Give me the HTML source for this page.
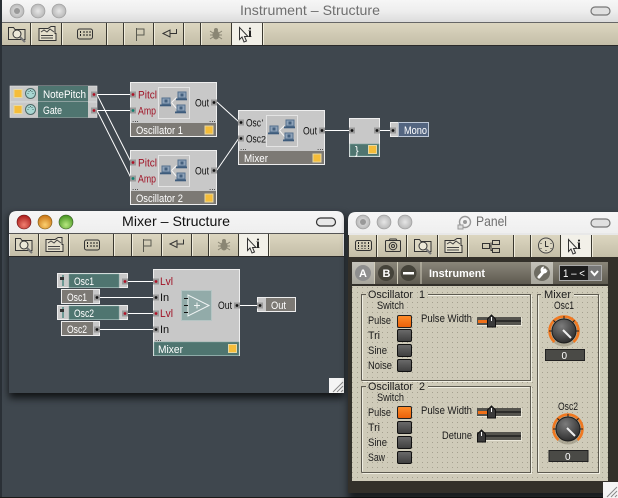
<!DOCTYPE html>
<html><head><meta charset="utf-8"><style>
html,body{margin:0;padding:0;background:#2a3036;width:618px;height:498px;overflow:hidden}
svg{display:block}
text{font-family:"Liberation Sans",sans-serif;font-size:11px;white-space:pre}
.w{fill:#fff}.r{fill:#a01225}.k{fill:#111}.p{fill:#1c1c1c}
.c{fill:none;stroke:#fff;stroke-width:1}
.i{fill:none;stroke:#333;stroke-width:1}
.d{fill:none;stroke:#3a382f}.l{fill:none;stroke:#f0ecdc}
</style></head><body>
<svg width="618" height="498" viewBox="0 0 618 498" xmlns="http://www.w3.org/2000/svg">
<defs>
<filter id="bl" x="-10%" y="-10%" width="120%" height="120%"><feGaussianBlur stdDeviation="4"/></filter>
<linearGradient id="title" x1="0" y1="0" x2="0" y2="1"><stop offset="0" stop-color="#f6f6f6"/><stop offset=".5" stop-color="#eeeeee"/><stop offset="1" stop-color="#dcdcdc"/></linearGradient>
<linearGradient id="tb" x1="0" y1="0" x2="0" y2="1"><stop offset="0" stop-color="#dcd6c0"/><stop offset="1" stop-color="#c4beA8"/></linearGradient>
<linearGradient id="hd" x1="0" y1="0" x2="0" y2="1"><stop offset="0" stop-color="#8a867a"/><stop offset="1" stop-color="#5e5a50"/></linearGradient>
<linearGradient id="hl" x1="0" y1="0" x2="0" y2="1"><stop offset="0" stop-color="#c4c2ba"/><stop offset="1" stop-color="#a8a69c"/></linearGradient>
<linearGradient id="sw" x1="0" y1="0" x2="0" y2="1"><stop offset="0" stop-color="#6b6b6b"/><stop offset="1" stop-color="#3e3e3e"/></linearGradient>
<linearGradient id="on" x1="0" y1="0" x2="0" y2="1"><stop offset="0" stop-color="#ff8d2a"/><stop offset="1" stop-color="#ea5f08"/></linearGradient>
<radialGradient id="kn" cx=".4" cy=".3" r=".8"><stop offset="0" stop-color="#7c7c7c"/><stop offset="1" stop-color="#242424"/></radialGradient>
<radialGradient id="gb" cx=".5" cy=".5" r=".6"><stop offset="0" stop-color="#e6e6e6"/><stop offset=".7" stop-color="#c0c0c0"/><stop offset="1" stop-color="#9a9a9a"/></radialGradient>
<radialGradient id="rb" cx=".5" cy=".7" r=".7"><stop offset="0" stop-color="#f08070"/><stop offset="1" stop-color="#a81818"/></radialGradient>
<radialGradient id="yb" cx=".5" cy=".7" r=".7"><stop offset="0" stop-color="#fbd070"/><stop offset="1" stop-color="#c87010"/></radialGradient>
<radialGradient id="grb" cx=".5" cy=".7" r=".7"><stop offset="0" stop-color="#b8e880"/><stop offset="1" stop-color="#40901c"/></radialGradient>
<pattern id="dots" width="5" height="5" patternUnits="userSpaceOnUse"><rect width="5" height="5" fill="#cfcbb9"/><rect x="2" y="2" width="1" height="1" fill="#a5a190"/></pattern>

<g id="pb"><rect x="-3" y="-3" width="6" height="6" fill="#9a9a9a"/><circle r="1.4" fill="#111"/></g>
<g id="pr"><rect x="-3" y="-3" width="6" height="6" fill="#9a9a9a"/><circle r="1.4" fill="#b01025"/></g>
<g id="pt"><rect x="-3" y="-3" width="6" height="6" fill="#9a9a9a"/><circle r="1.4" fill="#108070"/></g>
<g id="y"><rect x="-4" y="-4" width="8" height="8" fill="#f5bd3a" stroke="#e8d8a0"/></g>
<g id="midi"><circle r="5" fill="#a8d6d2" stroke="#4e6a68"/><path d="M-3,0h1M2,0h1M-2,-2h1M1,-2h1M-.5,-3h1" stroke="#4e6a68"/></g>
<g id="lap"><rect x="-3.500" y="-4.500" width="8" height="6" fill="#8ea2b8" stroke="#54708e"/><rect x="-1" y="-3" width="3" height="3" fill="#44607e"/><rect x="-5.500" y="2" width="11" height="1.800" fill="#3e5c7c"/></g>
<g id="mod"><rect x="0" y="0" width="31" height="31" fill="#c2c2c2" stroke="#e4e4e4"/><path d="M13,15 L18,10 M13,15 L18,21" stroke="#f4f4f4" fill="none"/><use href="#lap" x="7" y="15"/><use href="#lap" x="23" y="9"/><use href="#lap" x="22" y="22"/></g>

<g id="ic-s" class="i"><path d="M-8.500,-6.500 h5 l1.500,2 h10 v10 h-16.500z" fill="#dcd7c3"/><circle cx="0" cy="0" r="4" fill="#ece8d8"/><path d="M3,3 L8,8" stroke-width="2.200" stroke="#777"/></g>
<g id="ic-g" class="i"><path d="M-8,-5.500 h9 l3,-2 h4 v7 h1 v7 h-17z" fill="#e4dfcc"/><path d="M-6,-2 l3,-2 3,2 3,-3 l4,3 M-6,1.500 h12 M-6,4 h12" stroke="#444"/></g>
<g id="ic-m" class="i"><rect x="-7.500" y="-5" width="15" height="10" rx="2"/><path d="M-4.500,-3 v6 M-1,-3 v6 M2,-3 v6 M5,-3 v6" stroke="#222" stroke-dasharray="2 1"/></g>
<g id="ic-f"><path d="M-3.500,-6 V7 M-3.500,-5 H4 V1 H-3.500" fill="none" stroke="#5a5a50"/></g>
<g id="ic-a" class="i"><path d="M-7,-.5 L0,-4 V3Z M0,-.5 H6.500 V-5"/></g>
<g id="ic-b"><ellipse cx="0" cy="1" rx="3.500" ry="4.500" fill="#8a8674"/><circle cx="0" cy="-4" r="2" fill="#8a8674"/><path d="M-6,-3 L-3,-1 M6,-3 L3,-1 M-6,1 H6 M-6,5 L-3,3 M6,5 L3,3" stroke="#8a8674" fill="none"/></g>
<g id="ic-i"><path d="M-5.500,-6.500 V5.500 L-3,3 L-1,8 L1.500,7 L-.5,2.500 L3,2.500Z" fill="#f4f2ec" stroke="#333"/><text x="3" y="3" style="font-family:'Liberation Serif',serif;font-size:14px;font-weight:bold" fill="#222">i</text></g>

<g id="sl"><rect x="0" y="0" width="45" height="9" fill="#e9e6d8"/><rect x="0" y="0" width="44" height="8" fill="#55544e"/><rect x="1" y="3" width="43" height="2" fill="#2c2c2a"/></g>
<g id="th"><path d="M0,12 V4 L4,0 8,4 V12Z" fill="#3a3a3a" stroke="#111"/><path d="M4,2 V6" stroke="#fff"/></g>
<g id="swo"><rect width="14" height="12" rx="1.500" fill="url(#sw)" stroke="#111"/></g>
<g id="swn"><rect width="14" height="12" rx="1.500" fill="url(#on)" stroke="#222"/></g>
<g id="knob"><circle r="15.500" fill="#8a8470" opacity=".5"/><path d="M-9.500,11 A14.500,14.500 0 1 1 9.500,11" fill="none" stroke="#f07820" stroke-width="2.600"/><path d="M-15,0h3M15,0h-3M0,-15v3M-10.600,-10.600l2,2M10.600,-10.600l-2,2" stroke="#222"/><circle r="12" fill="url(#kn)" stroke="#1c1c1c"/><path d="M-1,-1 L7,7" stroke="#eee" stroke-width="2"/></g>
</defs>

<!-- TOP WINDOW -->
<rect x="2" y="0" width="616" height="497" fill="#3f474e"/>
<rect x="0" y="497" width="618" height="1" fill="#1a1a18"/>
<rect x="2" y="0" width="616" height="22" fill="url(#title)"/>
<rect x="2" y="22" width="616" height="1" fill="#666"/>
<circle cx="17" cy="11" r="7" fill="url(#gb)" stroke="#999" stroke-width=".6"/><circle cx="17" cy="11" r="3" fill="#999"/>
<circle cx="38" cy="11" r="7" fill="url(#gb)" stroke="#999" stroke-width=".6"/>
<circle cx="59" cy="11" r="7" fill="url(#gb)" stroke="#999" stroke-width=".6"/>
<text x="240" y="15" textLength="140" lengthAdjust="spacingAndGlyphs" style="font-size:14px" fill="#6f6f6f">Instrument – Structure</text>
<rect x="591" y="7" width="19" height="8" rx="4" fill="#e0e0e0" stroke="#777" stroke-width="1.200"/>
<rect x="2" y="23" width="616" height="22" fill="url(#tb)"/>
<rect x="2" y="45" width="616" height="1" fill="#2a2a2a"/>
<path class="d" d="M30.500,23V45M61.500,23V45M106.500,23V45M123.500,23V45M153.500,23V45M183.500,23V45M200.500,23V45M231.500,23V45M262.500,23V45"/>
<path class="l" d="M31.500,23V45M62.500,23V45M107.500,23V45M124.500,23V45M154.500,23V45M184.500,23V45M201.500,23V45M263.500,23V45"/>
<rect x="232" y="23" width="30" height="22" fill="#f2f0e8"/>
<use href="#ic-s" x="17" y="34"/><use href="#ic-g" x="47" y="34"/><use href="#ic-m" x="85" y="34"/><use href="#ic-f" x="140" y="34"/><use href="#ic-a" x="170" y="34"/><use href="#ic-b" x="216" y="34"/><use href="#ic-i" x="245" y="34"/>

<!-- top cables -->
<path class="c" d="M97,94.500H132M97,94.500L131,162M97,110.500H132M97,110.500L131,178M217,102L239,122M217,170L239,138M325,130.500H349M380,130.500H390"/>

<!-- NotePitch / Gate -->
<rect x="10" y="86" width="87" height="15.500" fill="#c8c8c8" stroke="#e6e6e6" stroke-width=".6"/>
<rect x="38" y="86" width="50" height="15.500" fill="#4f7570"/>
<use href="#y" x="18" y="93.500"/><use href="#midi" x="30.500" y="93.500"/>
<text x="43" y="98" class="w" textLength="43" lengthAdjust="spacingAndGlyphs">NotePitch</text><use href="#pr" x="94" y="94.500"/>
<rect x="10" y="102" width="87" height="15.500" fill="#c8c8c8" stroke="#e6e6e6" stroke-width=".6"/>
<rect x="38" y="102" width="50" height="15.500" fill="#4f7570"/>
<use href="#y" x="18" y="109.500"/><use href="#midi" x="30.500" y="109.500"/>
<text x="43" y="114" class="w" textLength="19" lengthAdjust="spacingAndGlyphs">Gate</text><use href="#pr" x="94" y="110.500"/>

<!-- Oscillator 1 -->
<rect x="130.500" y="82.500" width="86" height="54" fill="#c8c8c8" stroke="#eee"/>
<rect x="131" y="123" width="85" height="13" fill="#7c7974"/>
<use href="#mod" x="158.500" y="87.500"/>
<use href="#pr" x="133" y="94.500"/><use href="#pt" x="133" y="110.500"/>
<text x="138" y="98.500" class="r" textLength="19" lengthAdjust="spacingAndGlyphs">Pitcl</text><text x="138" y="114.500" class="r" textLength="18" lengthAdjust="spacingAndGlyphs">Amp</text>
<text x="195" y="106.500" class="k" textLength="14" lengthAdjust="spacingAndGlyphs">Out</text><use href="#pb" x="214" y="102.500"/>
<text x="132" y="122" class="k" style="font-size:8px">...</text><text x="209" y="122" class="k" style="font-size:8px">...</text>
<text x="136" y="134" class="w" textLength="47" lengthAdjust="spacingAndGlyphs">Oscillator 1</text><use href="#y" x="209" y="130"/>

<!-- Oscillator 2 -->
<rect x="130.500" y="150.500" width="86" height="54" fill="#c8c8c8" stroke="#eee"/>
<rect x="131" y="191" width="85" height="13" fill="#7c7974"/>
<use href="#mod" x="158.500" y="155.500"/>
<use href="#pr" x="133" y="162.500"/><use href="#pt" x="133" y="178.500"/>
<text x="138" y="166.500" class="r" textLength="19" lengthAdjust="spacingAndGlyphs">Pitcl</text><text x="138" y="182.500" class="r" textLength="18" lengthAdjust="spacingAndGlyphs">Amp</text>
<text x="195" y="174.500" class="k" textLength="14" lengthAdjust="spacingAndGlyphs">Out</text><use href="#pb" x="214" y="170.500"/>
<text x="132" y="190" class="k" style="font-size:8px">...</text><text x="209" y="190" class="k" style="font-size:8px">...</text>
<text x="136" y="202" class="w" textLength="47" lengthAdjust="spacingAndGlyphs">Oscillator 2</text><use href="#y" x="209" y="198"/>

<!-- Mixer (top) -->
<rect x="238.500" y="110.500" width="86" height="54" fill="#c8c8c8" stroke="#eee"/>
<rect x="239" y="151" width="85" height="13" fill="#7c7974"/>
<use href="#mod" x="266.500" y="115.500"/>
<use href="#pb" x="241" y="122.500"/><use href="#pb" x="241" y="138.500"/>
<text x="246" y="126.500" class="k" textLength="15" lengthAdjust="spacingAndGlyphs">Osc</text><text x="246" y="142.500" class="k" textLength="15" lengthAdjust="spacingAndGlyphs">Osc</text><text x="261.500" y="126" class="k" style="font-size:9px">'</text><text x="261" y="142.500" class="k" style="font-size:9px">2</text>
<text x="303" y="134.500" class="k" textLength="14" lengthAdjust="spacingAndGlyphs">Out</text><use href="#pb" x="322" y="130.500"/>
<text x="240" y="150" class="k" style="font-size:8px">...</text><text x="317" y="150" class="k" style="font-size:8px">...</text>
<text x="244" y="162" class="w" textLength="24" lengthAdjust="spacingAndGlyphs">Mixer</text><use href="#y" x="317" y="158"/>

<!-- small node -->
<rect x="349.500" y="118.500" width="30" height="38" fill="#c8c8c8" stroke="#eee"/>
<rect x="350" y="144" width="29" height="12" fill="#4f7570" stroke="#7fa5a0" stroke-width=".6"/>
<use href="#pb" x="352" y="130.500"/><use href="#pb" x="377" y="130.500"/>
<text x="355" y="154" class="w">}</text><use href="#y" x="372.500" y="149.500"/>

<!-- Mono -->
<rect x="390.500" y="122.500" width="38" height="14" fill="#c8c8c8" stroke="#eee"/>
<rect x="399" y="123" width="29" height="13" fill="#536580"/>
<rect x="398.500" y="122.500" width="30" height="14" fill="none" stroke="#9db0c8" stroke-width=".6"/>
<use href="#pb" x="393" y="130.500"/>
<text x="404" y="134" class="w" textLength="23" lengthAdjust="spacingAndGlyphs">Mono</text>

<!-- MIXER WINDOW -->
<rect x="9" y="215" width="335" height="183" fill="#000" opacity=".75" filter="url(#bl)"/>
<path d="M9,256 V219 Q9,211 17,211 H336 Q344,211 344,219 V256Z" fill="url(#title)"/>
<rect x="9" y="256" width="335" height="137" fill="#3f474e"/>
<circle cx="24" cy="222" r="7" fill="url(#rb)" stroke="#611" stroke-width=".6"/>
<circle cx="45" cy="222" r="7" fill="url(#yb)" stroke="#751" stroke-width=".6"/>
<circle cx="66" cy="222" r="7" fill="url(#grb)" stroke="#352" stroke-width=".6"/>
<text x="122" y="226" textLength="108" lengthAdjust="spacingAndGlyphs" style="font-size:14px" fill="#111">Mixer – Structure</text>
<rect x="316.500" y="218" width="19" height="8" rx="4" fill="#e8e8e8" stroke="#333" stroke-width="1.200"/>
<rect x="9" y="233" width="335" height="1" fill="#555"/>
<rect x="10" y="234" width="333" height="22" fill="url(#tb)"/>
<rect x="9" y="256" width="335" height="1" fill="#2a2a2a"/>
<path class="d" d="M38.500,234V256M68.500,234V256M113.500,234V256M131.500,234V256M161.500,234V256M191.500,234V256M208.500,234V256M238.500,234V256M268.500,234V256"/>
<path class="l" d="M39.500,234V256M69.500,234V256M114.500,234V256M132.500,234V256M162.500,234V256M192.500,234V256M209.500,234V256M269.500,234V256"/>
<rect x="239" y="234" width="29" height="22" fill="#f2f0e8"/>
<use href="#ic-s" x="24" y="245"/><use href="#ic-g" x="54" y="245"/><use href="#ic-m" x="92" y="245"/><use href="#ic-f" x="147" y="245"/><use href="#ic-a" x="177" y="244.500"/><use href="#ic-b" x="224" y="245"/><use href="#ic-i" x="253" y="245"/>

<path class="c" d="M128,281.500H154M100,297.500H154M128,313.500H154M100,329.500H154M240,305.500H257"/>

<!-- knob nodes -->
<rect x="57.500" y="273.500" width="70" height="14" fill="#c8c8c8" stroke="#eee"/>
<rect x="69" y="274" width="50" height="13.500" fill="#4f7570" stroke="#7fa5a0" stroke-width=".5"/>
<rect x="62" y="275" width="2" height="11" fill="#6d9994"/><rect x="60" y="277" width="4" height="3" fill="#333"/>
<text x="74" y="285" class="w" textLength="20" lengthAdjust="spacingAndGlyphs">Osc1</text><use href="#pr" x="125" y="281.500"/>
<rect x="61.500" y="289.500" width="38" height="14" fill="#c8c8c8" stroke="#eee"/>
<rect x="62" y="290" width="31" height="13" fill="#7c7974"/>
<text x="67" y="301" class="w" textLength="20" lengthAdjust="spacingAndGlyphs">Osc1</text><use href="#pb" x="97" y="297.500"/>
<rect x="57.500" y="305.500" width="70" height="14" fill="#c8c8c8" stroke="#eee"/>
<rect x="69" y="306" width="50" height="13.500" fill="#4f7570" stroke="#7fa5a0" stroke-width=".5"/>
<rect x="62" y="307" width="2" height="11" fill="#6d9994"/><rect x="60" y="309" width="4" height="3" fill="#333"/>
<text x="74" y="317" class="w" textLength="20" lengthAdjust="spacingAndGlyphs">Osc2</text><use href="#pr" x="125" y="313.500"/>
<rect x="61.500" y="321.500" width="38" height="14" fill="#c8c8c8" stroke="#eee"/>
<rect x="62" y="322" width="31" height="13" fill="#7c7974"/>
<text x="67" y="333" class="w" textLength="20" lengthAdjust="spacingAndGlyphs">Osc2</text><use href="#pb" x="97" y="329.500"/>

<!-- Mixer module -->
<rect x="153.500" y="269.500" width="86" height="86" fill="#c8c8c8" stroke="#eee"/>
<rect x="154" y="342" width="85" height="13.500" fill="#4f7570" stroke="#7fa5a0" stroke-width=".5"/>
<use href="#pr" x="156" y="281.500"/><use href="#pb" x="156" y="297.500"/><use href="#pr" x="156" y="313.500"/><use href="#pb" x="156" y="329.500"/>
<text x="160" y="285" class="r" textLength="13" lengthAdjust="spacingAndGlyphs">Lvl</text><text x="160" y="301" class="k">In</text><text x="160" y="317" class="r" textLength="13" lengthAdjust="spacingAndGlyphs">Lvl</text><text x="160" y="333" class="k">In</text>
<rect x="181.500" y="290.500" width="30" height="30" fill="#92aba9" stroke="#b5c5c4"/>
<path d="M188,295 V316 L209,305.500Z" fill="none" stroke="#f0f4f4"/>
<path d="M194,305.500h6M197,302.500v6" stroke="#f0f4f4"/>
<path d="M184,298.500h4M184,305.500h4M184,312.500h4" stroke="#111"/>
<text x="218" y="309" class="k" textLength="14" lengthAdjust="spacingAndGlyphs">Out</text><use href="#pb" x="237" y="305.500"/>
<text x="155" y="341" class="k" style="font-size:8px">...</text>
<text x="158" y="353" class="w" textLength="25" lengthAdjust="spacingAndGlyphs">Mixer</text><use href="#y" x="232.500" y="348.500"/>

<!-- Out -->
<rect x="257.500" y="297.500" width="38" height="14" fill="#c8c8c8" stroke="#eee"/>
<rect x="266" y="298" width="29" height="13" fill="#7c7974"/>
<use href="#pb" x="260" y="305.500"/><text x="271" y="309" class="w" textLength="15" lengthAdjust="spacingAndGlyphs">Out</text>

<!-- corner -->
<rect x="329" y="378" width="15" height="15" fill="#f4f4f4"/>
<path d="M333,392L343,382M337,392L343,386M341,392L343,390" stroke="#888" fill="none"/>

<!-- PANEL WINDOW -->
<rect x="348" y="216" width="270" height="285" fill="#000" opacity=".6" filter="url(#bl)"/>
<path d="M348,258 V220 Q348,212 356,212 H618 V258Z" fill="url(#title)"/>
<rect x="348" y="233" width="270" height="260" fill="#33302a"/>
<circle cx="363" cy="222" r="7" fill="url(#gb)" stroke="#999" stroke-width=".6"/><circle cx="363" cy="222" r="3" fill="#999"/>
<circle cx="384" cy="222" r="7" fill="url(#gb)" stroke="#999" stroke-width=".6"/>
<circle cx="405" cy="222" r="7" fill="url(#gb)" stroke="#999" stroke-width=".6"/>
<circle cx="465" cy="222" r="5.500" fill="none" stroke="#999" stroke-width="1.400"/><circle cx="465" cy="222" r="2" fill="#999"/><rect x="458" y="225" width="5" height="4" fill="#ddd" stroke="#999"/>
<text x="476" y="226" textLength="31" lengthAdjust="spacingAndGlyphs" style="font-size:14px" fill="#6f6f6f">Panel</text>
<rect x="591" y="219" width="19" height="8" rx="4" fill="#e0e0e0" stroke="#777" stroke-width="1.200"/>
<rect x="348" y="233" width="270" height="2" fill="#e8e8e8"/>
<rect x="349" y="235" width="269" height="22" fill="url(#tb)"/>
<path class="d" d="M376.500,235V257M406.500,235V257M437.500,235V257M467.500,235V257M513.500,235V257M530.500,235V257M560.500,235V257M591.500,235V257"/>
<path class="l" d="M377.500,235V257M407.500,235V257M438.500,235V257M468.500,235V257M514.500,235V257M531.500,235V257M592.500,235V257"/>
<rect x="561" y="235" width="30" height="22" fill="#f2f0e8"/>
<rect x="355.500" y="240.500" width="16" height="10" rx="2" fill="none" stroke="#333"/><path d="M358.500,242v7M362,242v7M365,242v7M368.500,242v7" stroke="#222" stroke-dasharray="2 1"/>
<g class="i"><rect x="385.500" y="240.500" width="15" height="11" rx="1"/><path d="M389,240.500l1,-1.500h6l1,1.500"/><circle cx="393" cy="246" r="3.800"/><circle cx="393" cy="246" r="1.500"/></g>
<use href="#ic-s" x="423" y="246"/><use href="#ic-g" x="453" y="246"/>
<path class="i" d="M482.500,243.500h7v5h-7zM492.500,240.500h7v4h-7zM492.500,248.500h7v4h-7zM489.500,246h1.500M491,242.500v8h1.500"/>
<circle cx="546" cy="245.500" r="7.500" fill="#dcd7c2" stroke="#444"/><path d="M545.500,241v5.500h3" stroke="#333" fill="none"/><path d="M541,243v1M551,243v1M541,248v1M551,248v1M546,250v1" stroke="#333"/>
<use href="#ic-i" x="574" y="246"/>

<!-- Panel header -->
<rect x="352" y="262" width="256" height="22" fill="url(#hd)"/>
<rect x="352" y="262" width="22" height="22" fill="url(#hl)"/>
<path d="M374.500,262V284M397.500,262V284M421,262V284" stroke="#cfcbb9"/>
<rect x="531" y="262" width="22" height="22" fill="url(#hl)"/>
<circle cx="363" cy="273" r="8" fill="#8e8e8e"/><text x="359" y="277" class="w" style="font-weight:bold;font-size:11px">A</text>
<circle cx="386" cy="273" r="8" fill="#45433a"/><text x="382.500" y="277" class="w" style="font-weight:bold;font-size:11px">B</text>
<circle cx="408.500" cy="273" r="8" fill="#45433a"/><rect x="403" y="272" width="11" height="2.500" fill="#fff"/>
<text x="429" y="277" class="w" textLength="56" lengthAdjust="spacingAndGlyphs" style="font-weight:bold;font-size:11px">Instrument</text>
<circle cx="542" cy="273" r="8" fill="#6e6c62"/><path d="M545,270 L539,277" stroke="#fff" stroke-width="3" stroke-linecap="round"/><path d="M544,266.500 a3.500,3.500 0 1 0 3.500,3.500 l-2,1 -2,-2z" fill="#fff"/>
<rect x="559.500" y="265.500" width="42" height="15" fill="#1c1c1c" stroke="#aaa"/>
<rect x="588" y="266" width="13" height="14" fill="#777"/>
<path d="M591,271 L594.500,275 598,271" stroke="#fff" stroke-width="2" fill="none"/>
<text x="563" y="277" class="w" textLength="22" lengthAdjust="spacingAndGlyphs">1 – &lt;</text>

<!-- Panel body -->
<rect x="352" y="286" width="256" height="195" fill="url(#dots)"/>
<g fill="none" stroke="#5d5a50"><path d="M361.500,380.500V294.500H366M428,294.500H530.500V380.500H361.500"/><path d="M361.500,472.500V386.500H366M428,386.500H530.500V472.500H361.500"/><path d="M537.500,472.500V294.500H541M574,294.500H598.500V472.500H537.500"/></g>
<g fill="none" stroke="#f0eee2"><path d="M362.500,379.500V295.500M428,295.500H529.500M362.500,381.500H531.500V295"/><path d="M362.500,471.500V387.500M428,387.500H529.500M362.500,473.500H531.500V387"/><path d="M538.500,471.500V295.500M574,295.500H597.500M538.500,473.500H599.500V295"/></g>

<g class="p">
<text x="368" y="298" textLength="57" lengthAdjust="spacingAndGlyphs">Oscillator  1</text>
<text x="377" y="309" textLength="27" lengthAdjust="spacingAndGlyphs">Switch</text>
<text x="368" y="324" textLength="23" lengthAdjust="spacingAndGlyphs">Pulse</text><text x="368" y="339" textLength="12" lengthAdjust="spacingAndGlyphs">Tri</text><text x="368" y="354" textLength="19" lengthAdjust="spacingAndGlyphs">Sine</text><text x="368" y="369" textLength="24" lengthAdjust="spacingAndGlyphs">Noise</text>
<text x="421" y="322" textLength="51" lengthAdjust="spacingAndGlyphs">Pulse Width</text>
<text x="368" y="390" textLength="57" lengthAdjust="spacingAndGlyphs">Oscillator  2</text>
<text x="377" y="401" textLength="27" lengthAdjust="spacingAndGlyphs">Switch</text>
<text x="368" y="416" textLength="23" lengthAdjust="spacingAndGlyphs">Pulse</text><text x="368" y="431" textLength="12" lengthAdjust="spacingAndGlyphs">Tri</text><text x="368" y="446" textLength="19" lengthAdjust="spacingAndGlyphs">Sine</text><text x="368" y="461" textLength="17" lengthAdjust="spacingAndGlyphs">Saw</text>
<text x="421" y="414" textLength="51" lengthAdjust="spacingAndGlyphs">Pulse Width</text>
<text x="442" y="439" textLength="30" lengthAdjust="spacingAndGlyphs">Detune</text>
<text x="544" y="298" textLength="27" lengthAdjust="spacingAndGlyphs">Mixer</text>
<text x="554" y="309" textLength="20" lengthAdjust="spacingAndGlyphs">Osc1</text>
<text x="558" y="410" textLength="20" lengthAdjust="spacingAndGlyphs">Osc2</text>
</g>

<use href="#swn" x="397.500" y="315.500"/><use href="#swo" x="397.500" y="329.500"/><use href="#swo" x="397.500" y="344.500"/><use href="#swo" x="397.500" y="359.500"/>
<use href="#swn" x="397.500" y="406.500"/><use href="#swo" x="397.500" y="421.500"/><use href="#swo" x="397.500" y="436.500"/><use href="#swo" x="397.500" y="451.500"/>

<use href="#sl" x="477" y="317"/><rect x="478" y="320" width="10" height="3" fill="#f07018"/><use href="#th" x="487.500" y="315"/>
<use href="#sl" x="477" y="408"/><rect x="478" y="411" width="10" height="3" fill="#f07018"/><use href="#th" x="487.500" y="406"/>
<use href="#sl" x="477" y="432"/><use href="#th" x="477.500" y="430"/>

<use href="#knob" x="564" y="331"/>
<use href="#knob" x="568" y="429"/>
<rect x="545.500" y="349.500" width="39" height="11" fill="#4a4a46" stroke="#222"/><text x="561.500" y="359" class="w" style="font-size:10px">0</text>
<rect x="549" y="450.500" width="39" height="11" fill="#4a4a46" stroke="#222"/><text x="565" y="460" class="w" style="font-size:10px">0</text>

<rect x="603" y="482" width="15" height="16" fill="#f4f4f4"/>
<path d="M607,497L617,487M611,497L617,491M615,497L617,495" stroke="#888" fill="none"/>
</svg>
</body></html>
